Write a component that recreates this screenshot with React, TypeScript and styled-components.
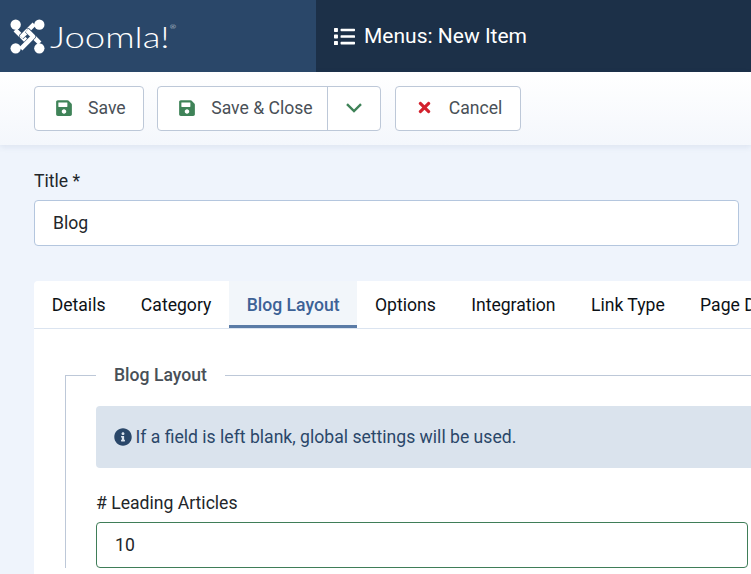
import React from 'react';
import styled, { createGlobalStyle } from 'styled-components';
import { FaSave, FaTimes, FaList, FaInfoCircle } from 'react-icons/fa';

const GlobalStyle = createGlobalStyle`
    html, body {
        margin: 0;
        height: 100%;
        overflow: hidden;
        background: #eff4fc;
        font-family: Roboto, "Liberation Sans", sans-serif;
    }
    * {
        box-sizing: border-box;
    }
`;

const Header = styled.header`
    display: flex;
    height: 72px;
    background: #1c3048;
`;

const Brand = styled.div`
    display: flex;
    align-items: center;
    gap: 5px;
    width: 316px;
    padding-left: 10px;
    background: #2a4769;
`;

const Wordmark = styled.span`
    position: relative;
    color: #fff;
    font-family: Lato, sans-serif;
    font-size: 29px;
    font-weight: 300;
    line-height: 1;
    transform: scaleX(1.26);
    transform-origin: left center;
`;

const Registered = styled.sup`
    position: absolute;
    top: 2px;
    left: 95px;
    font-size: 6px;
    line-height: 1;
`;

const PageTitle = styled.h1`
    display: flex;
    align-items: center;
    gap: 9px;
    margin: 0;
    padding-left: 18px;
    color: #fff;
    font-size: 21px;
    font-weight: 400;
`;

const Toolbar = styled.div`
    display: flex;
    align-items: flex-start;
    gap: 13.6px;
    height: 73px;
    padding: 14px 34px 0;
    background: linear-gradient(#fff, #f4f7fc);
    box-shadow: 0 2px 6px rgba(60, 90, 140, 0.1);
`;

const ButtonGroup = styled.div`
    display: flex;
    height: 45px;
    border: 1px solid #bdc8d8;
    border-radius: 4px;
    background: #fff;
`;

const ToolButton = styled.button<{ $width: number; $gap?: number }>`
    display: flex;
    align-items: center;
    gap: ${(p) => p.$gap ?? 15}px;
    width: ${(p) => p.$width}px;
    height: 100%;
    padding: 0 0 2px 20px;
    border: 0;
    background: transparent;
    color: #495057;
    font-family: inherit;
    font-size: 17.6px;
`;

const CaretButton = styled.button`
    display: flex;
    align-items: center;
    justify-content: center;
    width: 53px;
    height: 100%;
    padding: 0 0 2px;
    border: 0;
    border-left: 1px solid #bdc8d8;
    background: transparent;
`;

const Main = styled.main`
    padding: 24px 12px 0 34px;
`;

const FieldLabel = styled.label`
    display: block;
    margin-bottom: 7px;
    color: #22262a;
    font-size: 17.6px;
    line-height: 24px;
`;

const TextInput = styled.div<{ $valid?: boolean }>`
    display: flex;
    align-items: center;
    height: 46px;
    padding: 0 18px;
    border: 1px solid ${(p) => (p.$valid ? '#3f7d58' : '#b4c6de')};
    border-radius: 4px;
    background: #fff;
    color: #22262a;
    font-size: 17.6px;
`;

const TabCard = styled.section`
    width: 1100px;
    height: 400px;
    margin-top: 35px;
    border-radius: 4px 4px 0 0;
    background: #fff;
`;

const TabList = styled.div`
    display: flex;
    height: 48px;
    border-bottom: 1px solid #dbe4f0;
`;

const Tab = styled.div<{ $active?: boolean }>`
    display: flex;
    align-items: center;
    height: 47px;
    padding: 3px 17.68px 0;
    color: ${(p) => (p.$active ? '#3d6296' : '#0c1116')};
    background: ${(p) => (p.$active ? '#f2f6fa' : 'transparent')};
    border-bottom: 3px solid ${(p) => (p.$active ? '#5a7ba6' : 'transparent')};
    font-size: 17.6px;
    font-weight: ${(p) => (p.$active ? 500 : 400)};
    white-space: nowrap;
`;

const TabBody = styled.div`
    padding: 36px 0 0 31px;
`;

const Fieldset = styled.div`
    position: relative;
    margin-top: 10px;
    padding: 30px 0 0 30px;
    border-left: 1px solid #bdc8d8;
    border-top: 1px solid #bdc8d8;
`;

const Legend = styled.div`
    position: absolute;
    top: -12px;
    left: 30px;
    padding: 0 18px;
    background: #fff;
    color: #495057;
    font-size: 17.6px;
    font-weight: 500;
    line-height: 22px;
`;

const Alert = styled.div`
    display: flex;
    align-items: center;
    gap: 4px;
    height: 62px;
    padding: 0 0 0 17.5px;
    border-radius: 4px;
    background: #dae3ed;
    color: #2a4769;
    font-size: 17.6px;
`;

const FieldGroup = styled.div`
    width: 652px;
    margin-top: 23px;
`;

const knotArms = [
    'M5 10.5 L17 22.5 L23 16.5',
    'M23.5 5 L11.5 17 L17.5 23',
    'M29 23.5 L17 11.5 L11 17.5',
    'M10.5 29 L22.5 17 L16.5 11',
];

export default function App() {
    return (
        <>
            <GlobalStyle />
            <Header>
                <Brand>
                    <svg width="35" height="35" viewBox="0 0 34 34" fill="none">
                        {knotArms.map((d) => (
                            <g key={d} strokeLinejoin="round">
                                <path d={d} stroke="#2a4769" strokeWidth="5.4" />
                                <path d={d} stroke="#fff" strokeWidth="4.4" />
                            </g>
                        ))}
                        <g fill="#fff">
                            <circle cx="5.5" cy="5.5" r="5" />
                            <circle cx="28.5" cy="5.5" r="5" />
                            <circle cx="5.5" cy="28.5" r="5" />
                            <circle cx="28.5" cy="28.5" r="5" />
                        </g>
                    </svg>
                    <Wordmark>
                        Joomla!<Registered>®</Registered>
                    </Wordmark>
                </Brand>
                <PageTitle>
                    <FaList size={21} />
                    Menus: New Item
                </PageTitle>
            </Header>
            <Toolbar>
                <ButtonGroup>
                    <ToolButton $width={107.6}>
                        <FaSave size={18} color="#3f8358" />
                        Save
                    </ToolButton>
                </ButtonGroup>
                <ButtonGroup>
                    <ToolButton $width={169}>
                        <FaSave size={18} color="#3f8358" />
                        Save &amp; Close
                    </ToolButton>
                    <CaretButton>
                        <svg width="16" height="10" viewBox="0 0 16 10" fill="none">
                            <path d="M1 1.2 L8 8 L15 1.2" stroke="#3f8358" strokeWidth="2.4" />
                        </svg>
                    </CaretButton>
                </ButtonGroup>
                <ButtonGroup>
                    <ToolButton $width={124} $gap={16}>
                        <FaTimes size={17} color="#d3212d" />
                        Cancel
                    </ToolButton>
                </ButtonGroup>
            </Toolbar>
            <Main>
                <FieldLabel>Title *</FieldLabel>
                <TextInput>Blog</TextInput>
                <TabCard>
                    <TabList>
                        <Tab>Details</Tab>
                        <Tab>Category</Tab>
                        <Tab $active>Blog Layout</Tab>
                        <Tab>Options</Tab>
                        <Tab>Integration</Tab>
                        <Tab>Link Type</Tab>
                        <Tab>Page Display</Tab>
                    </TabList>
                    <TabBody>
                        <Fieldset>
                            <Legend>Blog Layout</Legend>
                            <Alert>
                                <FaInfoCircle size={18} color="#2a4769" />
                                If a field is left blank, global settings will be used.
                            </Alert>
                            <FieldGroup>
                                <FieldLabel># Leading Articles</FieldLabel>
                                <TextInput $valid>10</TextInput>
                            </FieldGroup>
                        </Fieldset>
                    </TabBody>
                </TabCard>
            </Main>
        </>
    );
}
